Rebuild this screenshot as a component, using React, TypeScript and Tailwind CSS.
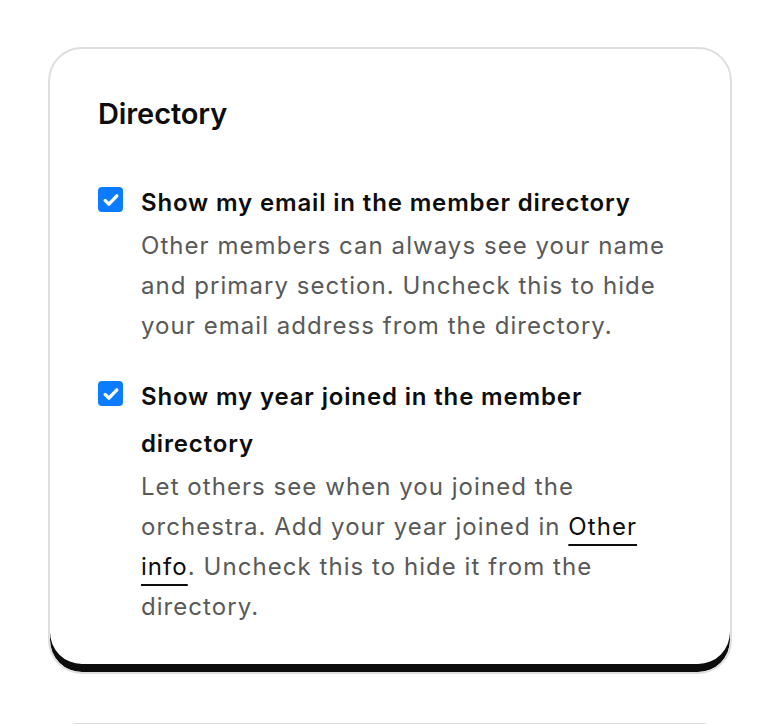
import React from "react";

function Check() {
  return (
    <span className="mt-[8px] flex h-[25px] w-[25px] shrink-0 items-center justify-center rounded-[4px] bg-[#0b7bff]">
      <svg viewBox="0 0 24 24" className="h-[20px] w-[20px]" fill="none" stroke="white" strokeWidth="4" strokeLinecap="round" strokeLinejoin="round">
        <path d="M5 12.5l4.5 4.5L19 7" />
      </svg>
    </span>
  );
}

export default function App() {
  return (
    <div className="h-[724px] overflow-hidden bg-white pt-[47px] font-['Inter',sans-serif]">
      <div className="mx-[48px] rounded-[34px] border-2 border-[#dedede] bg-white pb-[45px] pl-[48px] pr-[36px] pt-[45px] shadow-[inset_0_-8px_0_#0d0d0d]">
        <h2 className="text-[29px] font-semibold leading-[40px] tracking-[-0.1px] text-[#0d0d0d]">Directory</h2>
        <div className="mt-[45px] flex gap-[18px]">
          <Check />
          <div className="flex-1">
            <div className="text-[24px] font-semibold leading-[47px] tracking-[0.85px] text-[#0d0d0d]">Show my email in the member directory</div>
            <p className="text-[24px] leading-[40px] tracking-[1.05px] text-[#595959]">
              Other members can always see your name
              <br />
              and primary section. Uncheck this to hide
              <br />
              your email address from the directory.
            </p>
          </div>
        </div>
        <div className="mt-[27px] flex gap-[18px]">
          <Check />
          <div className="flex-1">
            <div className="text-[24px] font-semibold leading-[47px] tracking-[0.85px] text-[#0d0d0d]">
              Show my year joined in the member
              <br />
              directory
            </div>
            <p className="text-[24px] leading-[40px] tracking-[1.05px] text-[#595959]">
              Let others see when you joined the
              <br />
              orchestra. Add your year joined in{" "}
              <a href="#" className="text-[#0d0d0d] underline decoration-2 underline-offset-[9px]">
                Other
                <br />
                info
              </a>
              . Uncheck this to hide it from the
              <br />
              directory.
            </p>
          </div>
        </div>
      </div>
      <div className="mx-[72px] mt-[49px] h-[4px] rounded-t-[24px] border-t border-[#dcdcdc]" />
    </div>
  );
}
